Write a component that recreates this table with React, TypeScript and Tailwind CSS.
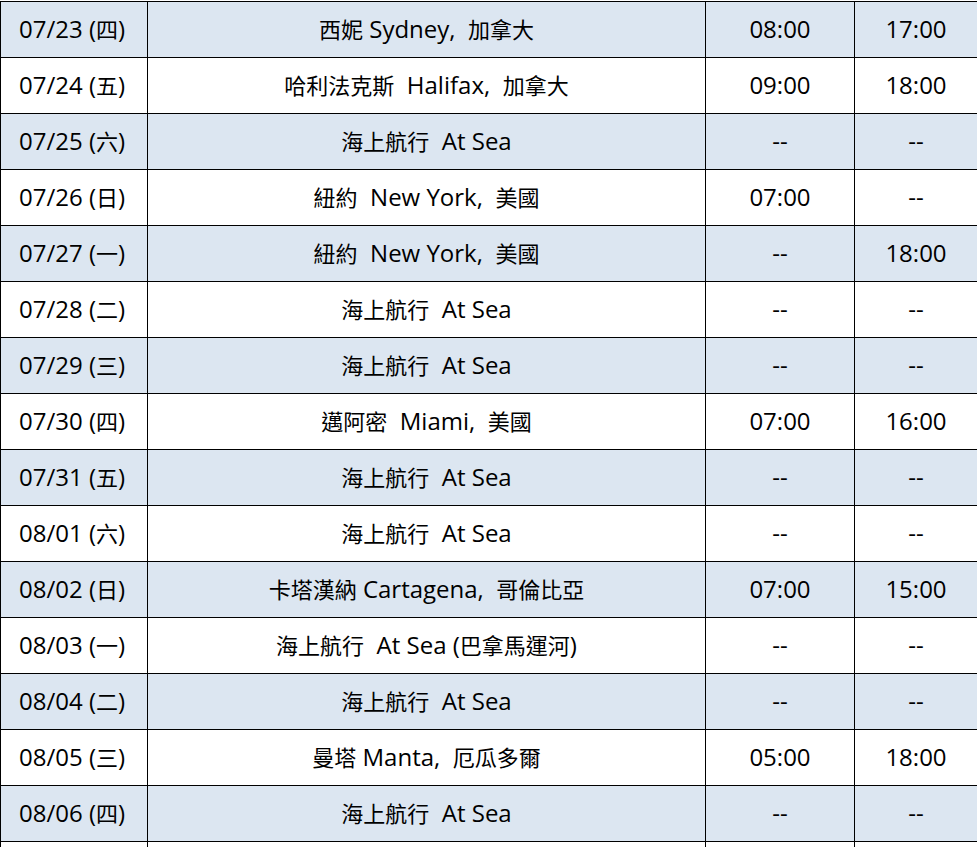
const rows: [string, string, string, string][] = [
  ["07/23 (四)", "西妮 Sydney,  加拿大", "08:00", "17:00"],
  ["07/24 (五)", "哈利法克斯  Halifax,  加拿大", "09:00", "18:00"],
  ["07/25 (六)", "海上航行  At Sea", "--", "--"],
  ["07/26 (日)", "紐約  New York,  美國", "07:00", "--"],
  ["07/27 (一)", "紐約  New York,  美國", "--", "18:00"],
  ["07/28 (二)", "海上航行  At Sea", "--", "--"],
  ["07/29 (三)", "海上航行  At Sea", "--", "--"],
  ["07/30 (四)", "邁阿密  Miami,  美國", "07:00", "16:00"],
  ["07/31 (五)", "海上航行  At Sea", "--", "--"],
  ["08/01 (六)", "海上航行  At Sea", "--", "--"],
  ["08/02 (日)", "卡塔漢納 Cartagena,  哥倫比亞", "07:00", "15:00"],
  ["08/03 (一)", "海上航行  At Sea (巴拿馬運河)", "--", "--"],
  ["08/04 (二)", "海上航行  At Sea", "--", "--"],
  ["08/05 (三)", "曼塔 Manta,  厄瓜多爾", "05:00", "18:00"],
  ["08/06 (四)", "海上航行  At Sea", "--", "--"],
];

// CJK runs render a bit smaller than the latin text, like the source sheet
function Mixed({ text }: { text: string }) {
  const parts = text.split(/([\u3000-\u9fff]+)/);
  return (
    <>
      {parts.map((p, i) =>
        /[\u3000-\u9fff]/.test(p) ? (
          <span key={i} className="text-[22px]">
            {p}
          </span>
        ) : (
          p
        )
      )}
    </>
  );
}

const cell = "border border-black pb-[2px]";

export default function App() {
  return (
    <div className="bg-white h-[847px] overflow-hidden">
      <table
        className="border-collapse table-fixed w-[977px] mt-px text-[24px] leading-[30px] text-black whitespace-pre"
        style={{ fontFamily: '"Open Sans", "Noto Sans CJK TC", sans-serif' }}
      >
        <colgroup>
          <col className="w-[147px]" />
          <col className="w-[558px]" />
          <col className="w-[149px]" />
          <col className="w-[123px]" />
        </colgroup>
        <tbody>
          {rows.map((r, i) => (
            <tr key={r[0]} className={i % 2 === 0 ? "bg-[#dce6f1] h-[56px]" : "bg-white h-[56px]"}>
              <td className={`${cell} pl-[18px] text-left`}>
                <Mixed text={r[0]} />
              </td>
              <td className={`${cell} text-center`}>
                <Mixed text={r[1]} />
              </td>
              <td className={`${cell} text-center`}>{r[2]}</td>
              <td className={`${cell} text-center`}>{r[3]}</td>
            </tr>
          ))}
          <tr className="bg-white h-[56px]">
            <td className={cell} />
            <td className={cell} />
            <td className={cell} />
            <td className={cell} />
          </tr>
        </tbody>
      </table>
    </div>
  );
}
